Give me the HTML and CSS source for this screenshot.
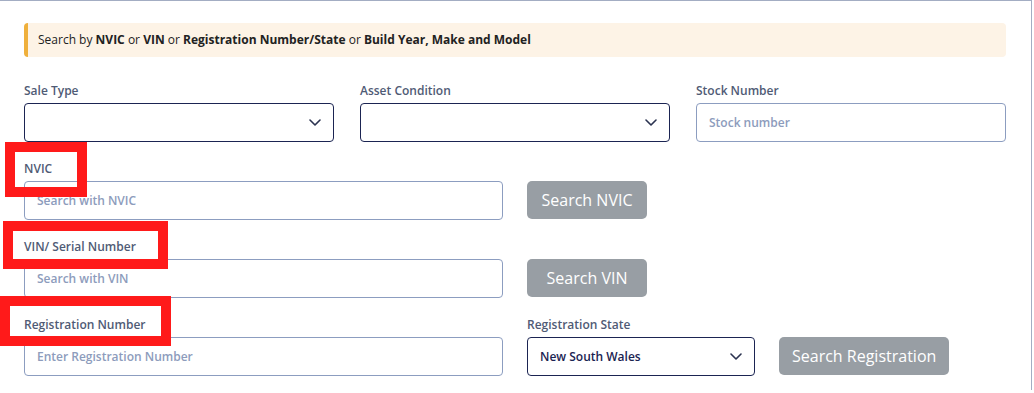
FILE: index.html
```html
<!DOCTYPE html>
<html lang="en">
<head>
  <meta charset="UTF-8">
  <title>Asset Search</title>
  <link rel="stylesheet" href="styles.css">
</head>
<body>
  <div class="panel">
    <!-- Hint banner -->
    <div class="hint">
      Search by <b>NVIC</b> or <b>VIN</b> or <b>Registration Number/State</b> or <b>Build Year, Make and Model</b>
    </div>

    <!-- Row 1: sale type, condition, stock number -->
    <div class="row-three">
      <div class="field">
        <label>Sale Type</label>
        <div class="select">
          <span></span>
          <svg class="chevron" width="12" height="7" viewBox="0 0 12 7"><path d="M1 1l5 5 5-5" fill="none" stroke="#2b3350" stroke-width="1.6" stroke-linecap="round" stroke-linejoin="round"/></svg>
        </div>
      </div>
      <div class="field">
        <label>Asset Condition</label>
        <div class="select">
          <span></span>
          <svg class="chevron" width="12" height="7" viewBox="0 0 12 7"><path d="M1 1l5 5 5-5" fill="none" stroke="#2b3350" stroke-width="1.6" stroke-linecap="round" stroke-linejoin="round"/></svg>
        </div>
      </div>
      <div class="field">
        <label>Stock Number</label>
        <input type="text" placeholder="Stock number">
      </div>
    </div>

    <!-- Row 2: NVIC -->
    <div class="row">
      <div class="field main">
        <label>NVIC</label>
        <input type="text" placeholder="Search with NVIC">
      </div>
      <button class="btn">Search NVIC</button>
    </div>

    <!-- Row 3: VIN -->
    <div class="row">
      <div class="field main">
        <label>VIN/ Serial Number</label>
        <input type="text" placeholder="Search with VIN">
      </div>
      <button class="btn">Search VIN</button>
    </div>

    <!-- Row 4: Registration -->
    <div class="row last">
      <div class="field main">
        <label>Registration Number</label>
        <input type="text" placeholder="Enter Registration Number">
      </div>
      <div class="field state">
        <label>Registration State</label>
        <div class="select filled">
          <span>New South Wales</span>
          <svg class="chevron" width="12" height="7" viewBox="0 0 12 7"><path d="M1 1l5 5 5-5" fill="none" stroke="#2b3350" stroke-width="1.6" stroke-linecap="round" stroke-linejoin="round"/></svg>
        </div>
      </div>
      <button class="btn">Search Registration</button>
    </div>
  </div>

  <!-- Review markers -->
  <div class="marker m-nvic"></div>
  <div class="marker m-vin"></div>
  <div class="marker m-reg"></div>
</body>
</html>
```

FILE: styles.css
```css
/* Page */
body {
  margin: 0;
  background: #fff;
  font-family: "Open Sans", "Noto Sans", Arial, sans-serif;
  color: #222;
}
.panel {
  width: 982px;
  padding: 22px 25px 14px 24px;
  border-top: 1px solid #a3adc3;
  border-right: 1px solid #a3adc3;
}
/* Hint banner */
.hint {
  background: #fdf3e6;
  border-left: 4px solid #efb03c;
  border-radius: 4px;
  padding: 0 10px;
  height: 34px;
  line-height: 34px;
  font-size: 12px;
  color: #222;
  margin-bottom: 25px;
}
.hint b {
  font-weight: 700;
}
/* Form rows */
.row-three {
  display: grid;
  grid-template-columns: 1fr 1fr 1fr;
  gap: 26px;
  margin-bottom: 18px;
}
.row {
  display: flex;
  align-items: flex-end;
  gap: 24px;
  margin-bottom: 18px;
}
.row.last {
  margin-bottom: 0;
}
.field {
  display: flex;
  flex-direction: column;
}
.field.main {
  width: 479px;
}
.field.state {
  width: 228px;
}
label {
  font-size: 12px;
  line-height: 17px;
  font-weight: 600;
  color: #505b75;
  margin-bottom: 4px;
}
input {
  box-sizing: border-box;
  height: 39px;
  padding: 0 12px;
  border: 1px solid #8c9dc0;
  border-radius: 4px;
  font-family: inherit;
  font-size: 12px;
  font-weight: 600;
  color: #1b2452;
  outline: none;
}
input::placeholder {
  color: #8d9cbc;
}
.select {
  box-sizing: border-box;
  height: 39px;
  padding: 0 12px;
  border: 1px solid #1b2452;
  border-radius: 4px;
  display: flex;
  align-items: center;
  justify-content: space-between;
  font-size: 12px;
  font-weight: 600;
  color: #1b2452;
}
/* Buttons */
.btn {
  height: 38px;
  margin-bottom: 1px;
  padding: 0 13px;
  min-width: 120px;
  border: none;
  border-radius: 5px;
  background: #989ea4;
  color: #fff;
  font-family: inherit;
  font-size: 16px;
  cursor: pointer;
}
/* Red review markers over the labels */
.marker {
  position: absolute;
  box-sizing: border-box;
  border: 10px solid #ff1a1a;
}
.m-nvic {
  left: 5px;
  top: 142px;
  width: 82px;
  height: 55px;
}
.m-vin {
  left: 3px;
  top: 221px;
  width: 165px;
  height: 48px;
}
.m-reg {
  left: 0;
  top: 296px;
  width: 171px;
  height: 50px;
}
```
